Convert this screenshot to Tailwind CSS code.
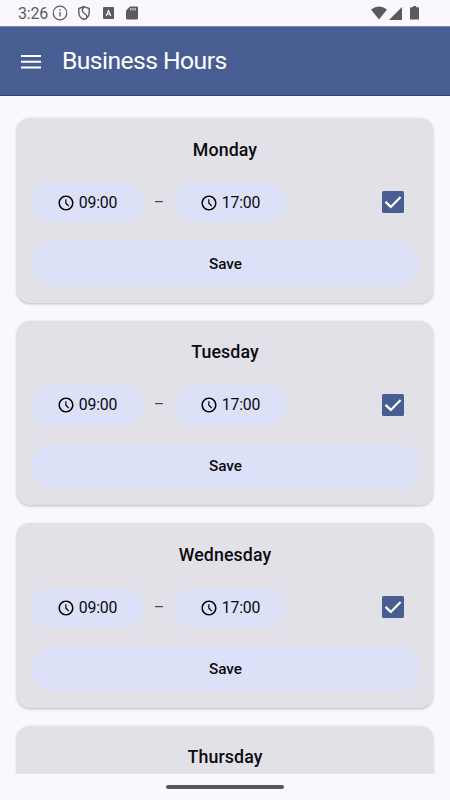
<!DOCTYPE html>
<html lang="en">
<head>
<meta charset="utf-8">
<title>Business Hours</title>
<script src="https://cdn.jsdelivr.net/npm/@tailwindcss/browser@4"></script>
</head>
<body class="bg-[#f9f8ff]">
<svg class="hidden">
  <symbol id="clock" viewBox="0 0 24 24"><path d="M11.99 2C6.47 2 2 6.48 2 12s4.47 10 9.99 10C17.52 22 22 17.52 22 12S17.52 2 11.99 2zM12 20c-4.42 0-8-3.58-8-8s3.58-8 8-8 8 3.58 8 8-3.58 8-8 8z"/><path d="M11 7h1.600v4.800l3.700 3.700-1.100 1.200-4.200-4.200z"/></symbol>
  <symbol id="check" viewBox="0 0 22 22"><rect width="22" height="22" rx="1.500" fill="#485d92"/><path d="M3.500 10.900l5.300 5L18.600 6" fill="none" stroke="#fff" stroke-width="2.200"/></symbol>
</svg>
<div class="flex flex-col w-[450px] h-[800px] overflow-hidden font-['Roboto',sans-serif] text-[#0b0b10]">
  <div class="h-[26px] shrink-0 flex items-center pl-[18px] pr-[30px] text-[#5b5b5e]">
    <span class="text-[16px] w-[34px] leading-none tracking-[-0.2px] pt-px">3:26</span>
    <svg class="w-4 h-4" viewBox="0 0 16 16" fill="none" stroke="currentColor" stroke-width="1.200"><circle cx="8" cy="8" r="6.800"/><path d="M8 7v4.500M8 4.200v1.500" stroke-width="1.300"/></svg>
    <svg class="w-[14px] h-4 ml-[9px]" viewBox="0 0 14 16" fill="none" stroke="currentColor" stroke-width="1.400"><path d="M7 1.600L12.200 3.500V7.500C12.200 11 9.800 13.500 7 14.500C4.200 13.500 1.800 11 1.800 7.500V3.500ZM7 1.800C4.500 5 5 7 7.500 8.500C9.500 9.700 10.300 10.800 9.800 12.500"/></svg>
    <svg class="w-[11px] h-3 ml-3" viewBox="0 0 11 12"><rect width="11" height="12" rx="1" fill="currentColor"/><path d="M3.200 9l2.300-5.500L7.800 9M4 7.200h3" fill="none" stroke="#f9f8ff" stroke-width="1.200"/></svg>
    <svg class="w-3 h-[14px] ml-3" viewBox="0 0 12 14"><path d="M4 .5h7q1 0 1 1V12.500q0 1-1 1H1q-1 0-1-1V4.500z" fill="currentColor"/><path d="M4.800 2v2.500M7 2v2.500M9.200 2v2.500" stroke="#f9f8ff" stroke-width=".9"/></svg>
    <svg class="w-4 h-[14px] ml-auto" viewBox="0 0 16 14"><path d="M0 3.500Q8-2.500 16 3.500L8 13.500z" fill="currentColor"/></svg>
    <svg class="w-[13px] h-[13px] ml-[2.500px]" viewBox="0 0 13 13"><path d="M13 0v13H0z" fill="currentColor"/></svg>
    <svg class="w-[9px] h-[14px] ml-2 mr-px" viewBox="0 0 9 14"><path d="M3 0h3v1.200h2.500q.5 0 .5.500V13q0 .5-.5.500H.5q-.5 0-.5-.5V1.700q0-.5.5-.5H3z" fill="currentColor"/></svg>
  </div>
  <header class="h-[70px] shrink-0 bg-[#485d92] border-b border-[#29477f] border-t border-t-[#7c89b1] flex items-center pl-[21px] gap-[21px] text-white">
    <svg class="w-5 h-[14px] mt-px" viewBox="0 0 20 14" fill="currentColor"><path d="M0 0h20v2H0zM0 5.800h20v2H0zM0 11.500h20v2H0z"/></svg>
    <h1 class="text-[24.700px] leading-[30px] tracking-[-0.560px]">Business Hours</h1>
  </header>
  <main id="days" class="flex-1 min-h-0 overflow-hidden px-[17px] pt-[22.300px] flex flex-col gap-[18px]"></main>
  <footer class="h-[26.500px] shrink-0 flex justify-center pt-[11.500px]"><div class="w-[118px] h-1 rounded-full bg-[#55555a]"></div></footer>
</div>
<template id="card">
  <section class="h-[184.600px] shrink-0 rounded-[13px] bg-[#e2e1e7] shadow-[0_1px_3px_rgba(0,0,0,0.25)] px-[14px] pt-[18.400px]">
    <h2 class="text-center text-[17.800px] leading-[25px] font-medium tracking-[0.100px]"></h2>
    <div class="mt-[21.200px] h-[39.500px] flex items-center">
      <div class="w-[113px] h-full rounded-full bg-[#dce1f8] flex items-center justify-center gap-1"><svg class="w-[18px] h-[18px]"><use href="#clock"/></svg><span class="text-[15.800px] leading-5 tracking-[-0.200px] pr-px">09:00</span></div>
      <span class="w-[30px] h-5 flex justify-center text-[16px] leading-5 text-[#44464f]">–</span>
      <div class="w-[113px] h-full rounded-full bg-[#dce1f8] flex items-center justify-center gap-1"><svg class="w-[18px] h-[18px]"><use href="#clock"/></svg><span class="text-[15.800px] leading-5 tracking-[-0.200px] pr-px">17:00</span></div>
      <svg class="w-[22px] h-[22px] ml-auto mr-[15px] mb-px"><use href="#check"/></svg>
    </div>
    <button class="mt-[19px] block w-[389px] h-[44.500px] rounded-full bg-[#dce1f8] text-[15.300px] leading-5 font-medium">Save</button>
  </section>
</template>
<script>
  const list = document.getElementById('days');
  for (const day of ['Monday', 'Tuesday', 'Wednesday', 'Thursday']) {
    const card = document.getElementById('card').content.cloneNode(true);
    card.querySelector('h2').textContent = day;
    // The last card only shows its heading above the fold.
    if (day === 'Thursday') card.querySelectorAll('div, button').forEach(el => el.remove());
    list.append(card);
  }
</script>
</body>
</html>
